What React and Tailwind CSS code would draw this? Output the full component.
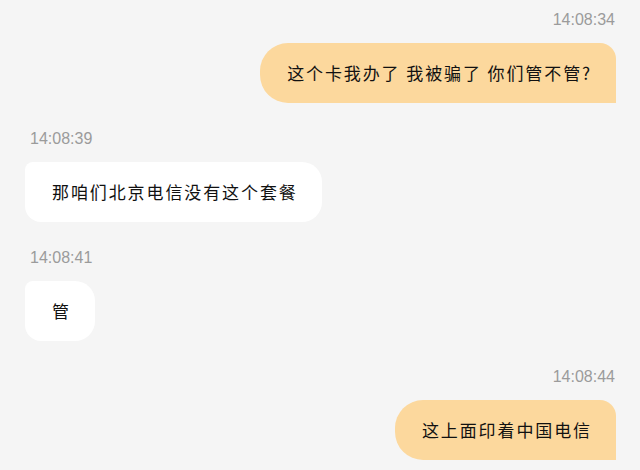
import React from 'react';

const messages = [
  { time: '14:08:34', text: '这个卡我办了 我被骗了 你们管不管?', mine: true },
  { time: '14:08:39', text: '那咱们北京电信没有这个套餐', mine: false },
  { time: '14:08:41', text: '管', mine: false },
  { time: '14:08:44', text: '这上面印着中国电信', mine: true },
];

const Bubble = ({ time, text, mine }) => (
  <div className={mine ? 'flex flex-col items-end' : 'flex flex-col items-start'}>
    <div
      className={
        "h-[20px] leading-[20px] text-[16px] text-[#9b9b9b] font-['Liberation_Sans',Arial,sans-serif] " +
        (mine ? 'pr-[1px]' : 'pl-[5px]')
      }
    >
      {time}
    </div>
    <div
      className={
        'mt-[13px] h-[60px] flex items-center pl-[27px] pr-[24px] text-[17px] tracking-[1.9px] text-[#111] whitespace-pre ' +
        (mine
          ? 'bg-[#fcd89d] rounded-l-[28px] rounded-tr-[16px] rounded-br-none'
          : 'bg-white rounded-r-[20px] rounded-bl-[16px] rounded-tl-[8px]')
      }
    >
      {text}
    </div>
  </div>
);

export default function App() {
  return (
    <div className="w-[640px] h-[470px] bg-[#f5f5f5] overflow-hidden pt-[10px] pl-[25px] pr-[24px] flex flex-col gap-[26px] font-['Noto_Sans_CJK_SC','Noto_Sans',sans-serif]">
      {messages.map((m, i) => (
        <Bubble key={i} {...m} />
      ))}
    </div>
  );
}
